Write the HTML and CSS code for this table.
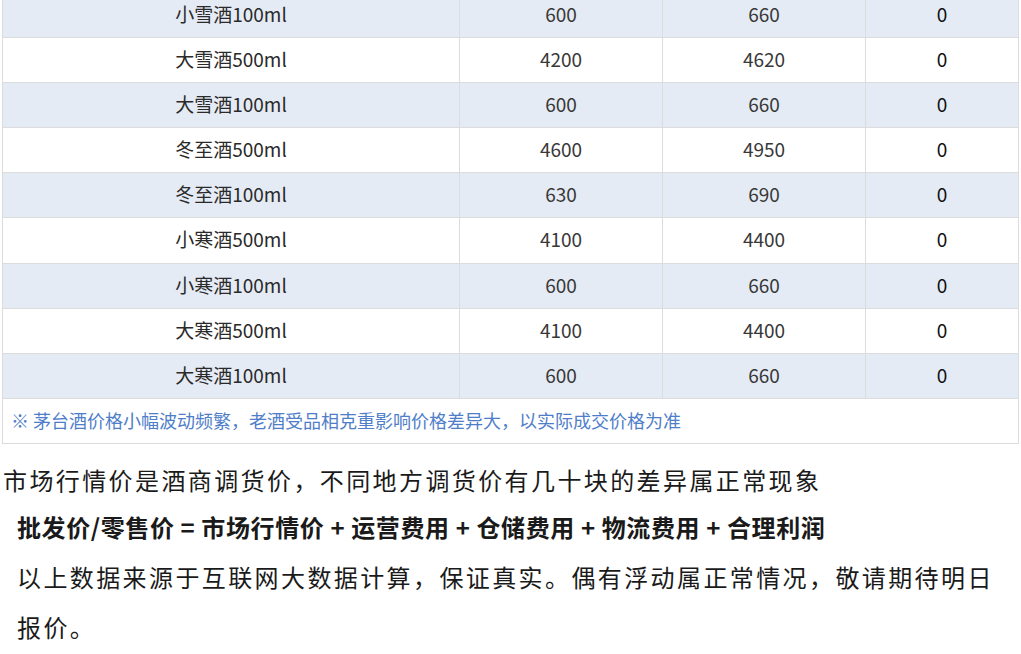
FILE: index.html
```html
<!DOCTYPE html>
<html lang="zh-CN">
<head>
<meta charset="utf-8">
<title>价格表</title>
<link rel="stylesheet" href="styles.css">
</head>
<body>
<div class="page">
  <div class="top-strip"></div>
  <table class="price-table">
    <colgroup>
      <col class="c1"><col class="c2"><col class="c3"><col class="c4">
    </colgroup>
    <tbody>
      <tr class="alt"><td>小雪酒100ml</td><td class="num">600</td><td class="num">660</td><td class="zero">0</td></tr>
      <tr><td>大雪酒500ml</td><td class="num">4200</td><td class="num">4620</td><td class="zero">0</td></tr>
      <tr class="alt"><td>大雪酒100ml</td><td class="num">600</td><td class="num">660</td><td class="zero">0</td></tr>
      <tr><td>冬至酒500ml</td><td class="num">4600</td><td class="num">4950</td><td class="zero">0</td></tr>
      <tr class="alt"><td>冬至酒100ml</td><td class="num">630</td><td class="num">690</td><td class="zero">0</td></tr>
      <tr class="tall"><td>小寒酒500ml</td><td class="num">4100</td><td class="num">4400</td><td class="zero">0</td></tr>
      <tr class="alt"><td>小寒酒100ml</td><td class="num">600</td><td class="num">660</td><td class="zero">0</td></tr>
      <tr><td>大寒酒500ml</td><td class="num">4100</td><td class="num">4400</td><td class="zero">0</td></tr>
      <tr class="alt"><td>大寒酒100ml</td><td class="num">600</td><td class="num">660</td><td class="zero">0</td></tr>
      <tr class="note-row"><td colspan="4">※ 茅台酒价格小幅波动频繁，老酒受品相克重影响价格差异大，以实际成交价格为准</td></tr>
    </tbody>
  </table>
  <p class="lead">市场行情价是酒商调货价，不同地方调货价有几十块的差异属正常现象</p>
  <p class="formula">批发价/零售价 = 市场行情价 + 运营费用 + 仓储费用 + 物流费用 + 合理利润</p>
  <p class="source">以上数据来源于互联网大数据计算，保证真实。偶有浮动属正常情况，敬请期待明日报价。</p>
</div>
</body>
</html>
```

FILE: styles.css
```css
html, body {
  margin: 0;
  padding: 0;
  background: #ffffff;
}

body {
  font-family: "Noto Sans CJK SC", "Noto Sans", "Liberation Sans", sans-serif;
  color: #222222;
  overflow: hidden;
}

.page {
  position: relative;
  width: 1021px;
  padding: 0 3px 0 2px;
  box-sizing: border-box;
}

.top-strip {
  position: absolute;
  left: 0;
  top: 0;
  width: 100%;
  height: 3px;
  background: #ebebeb;
  z-index: 2;
}

.price-table {
  width: 1016px;
  margin-top: -8px;
  border-collapse: collapse;
  table-layout: fixed;
  font-size: 19px;
  color: #2a2a2a;
}

.c1 { width: 457px; }
.c2 { width: 203px; }
.c3 { width: 203px; }
.c4 { width: 153px; }

.price-table td {
  height: 44px;
  padding: 0 0 3px 0;
  box-sizing: border-box;
  border: 1px solid #dcdcdc;
  text-align: center;
  vertical-align: middle;
  line-height: 24px;
}

.price-table tr td {
  height: 45px;
}

.price-table tr.tall td {
  height: 46px;
}

.price-table tr.alt td {
  background: #e5ebf5;
}

.price-table td.num {
  color: #383838;
}

.price-table td.zero {
  color: #111111;
}

.price-table tr.note-row td {
  text-align: left;
  padding-left: 8px;
  font-size: 18px;
  color: #4f7ec9;
  background: #ffffff;
}

.lead,
.source {
  font-size: 24px;
  letter-spacing: 2.4px;
  color: #1a1a1a;
}

.lead {
  margin: 18px 0 0 1px;
  line-height: 36px;
}

.formula {
  margin: 11px 0 0 15px;
  font-size: 24px;
  letter-spacing: 0.6px;
  font-weight: 700;
  line-height: 36px;
  color: #1a1a1a;
}

.source {
  margin: 7px 0 0 15px;
  line-height: 50px;
}
```
